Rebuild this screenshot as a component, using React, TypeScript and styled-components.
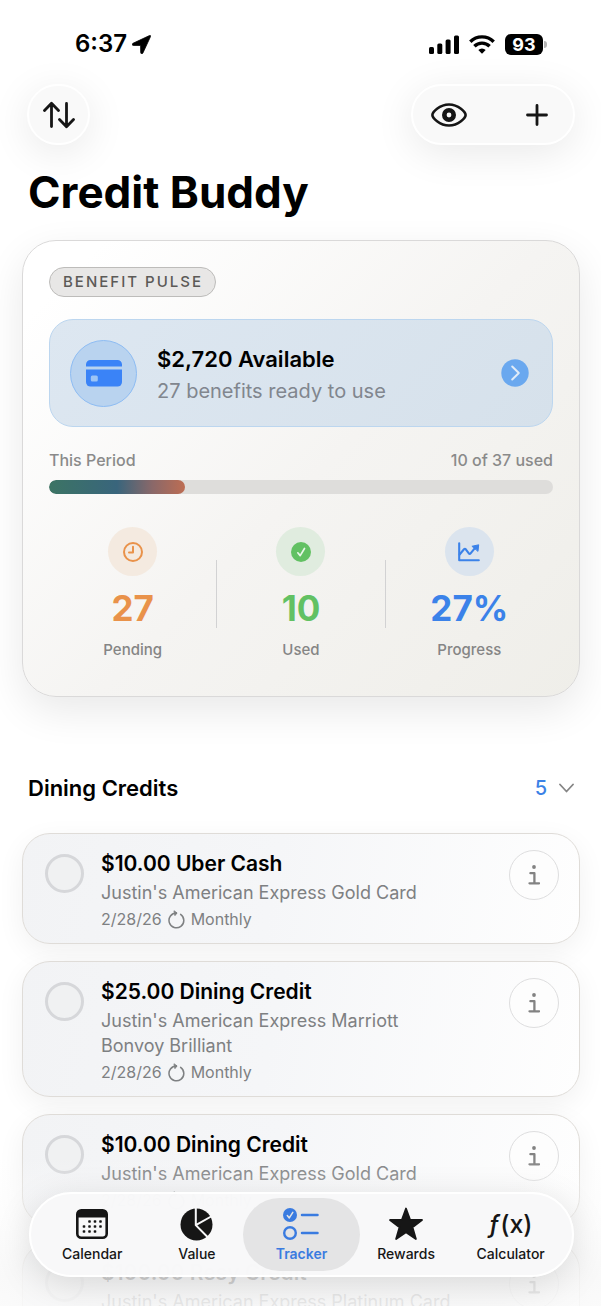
import React from "react";
import styled, { createGlobalStyle, css } from "styled-components";

const GlobalStyle = createGlobalStyle`
  *, *::before, *::after { box-sizing: border-box; }
  html, body, #root { margin: 0; padding: 0; height: 100%; }
  body {
    background: #ffffff;
    color: #000000;
    font-family: Inter, "Liberation Sans", sans-serif;
    -webkit-font-smoothing: antialiased;
  }
  button, input { font: inherit; color: inherit; margin: 0; padding: 0; }
  button { border: 0; background: none; cursor: pointer; }
  h1, h2, h3, p, ul, dl, dt, dd { margin: 0; padding: 0; font-weight: inherit; }
  ul { list-style: none; }
  svg { display: block; flex: none; }
`;

const Shell = styled.div`
  position: relative;
  height: 100vh;
  overflow: hidden;
`;

const Scroller = styled.div`
  height: 100%;
  overflow-y: auto;
  scrollbar-width: none;
  padding: 0 21px 120px 22px;
`;

/* ---------- status bar ---------- */

const StatusBar = styled.div`
  display: flex;
  justify-content: space-between;
  align-items: center;
  height: 84px;
  padding: 4px 33px 0 53px;
`;

const StatusGroup = styled.div<{ $gap: number }>`
  display: flex;
  align-items: center;
  gap: ${(p) => p.$gap}px;
`;

const Clock = styled.time`
  font-size: 24px;
  line-height: 28px;
  font-weight: 600;
`;

const Battery = styled.div`
  display: flex;
  align-items: center;
  gap: 1px;
  &::after {
    content: "";
    width: 3px;
    height: 7px;
    border-radius: 0 3px 3px 0;
    background: #b4b4b4;
  }
`;

const BatteryLevel = styled.span`
  width: 38px;
  height: 21px;
  border-radius: 6px;
  background: #000;
  color: #fff;
  font-size: 18px;
  line-height: 21px;
  font-weight: 700;
  text-align: center;
`;

/* ---------- header ---------- */

const Toolbar = styled.div`
  display: flex;
  justify-content: space-between;
  padding: 0 5px;
`;

const Glass = styled.div<{ $wide?: boolean }>`
  display: flex;
  justify-content: space-between;
  width: ${(p) => (p.$wide ? 164 : 63)}px;
  height: 61px;
  border: 2px solid #ffffff;
  border-radius: 31px;
  background: #f9f9f9;
  box-shadow: 0 8px 40px rgba(0, 0, 0, 0.09);
`;

const ToolButton = styled.button<{ $fill?: boolean }>`
  display: flex;
  align-items: center;
  justify-content: center;
  width: ${(p) => (p.$fill ? "100%" : "72px")};
  height: 100%;
`;

const PageTitle = styled.h1`
  margin: 19px 0 20px;
  padding-left: 6px;
  font-size: 44px;
  line-height: 56px;
  font-weight: 700;
`;

/* ---------- pulse card ---------- */

const PulseCard = styled.section`
  padding: 26px 26px 36px;
  border: 1px solid #dad9d9;
  border-radius: 34px;
  background: linear-gradient(135deg, #ffffff 8%, #f5f4f2 52%, #efeee9 100%);
  box-shadow: 0 14px 40px rgba(0, 0, 0, 0.09);
`;

const Badge = styled.h2`
  width: fit-content;
  height: 30px;
  padding: 0 12px 0 13px;
  border: 1px solid #bdbcba;
  border-radius: 15px;
  background: #e8e7e6;
  color: #5c5a57;
  font-size: 15px;
  line-height: 28px;
  font-weight: 500;
  letter-spacing: 2px;
`;

const Available = styled.button`
  display: flex;
  align-items: center;
  width: 100%;
  height: 108px;
  margin: 22px 0 21px;
  padding: 0 23px 0 20px;
  border: 1px solid #bcd6ef;
  border-radius: 24px;
  background: linear-gradient(135deg, #dde7f1, #d6e1eb);
  text-align: left;
`;

const CardDisc = styled.span`
  display: flex;
  align-items: center;
  justify-content: center;
  width: 67px;
  height: 67px;
  border: 1px solid #8dbcf3;
  border-radius: 50%;
  background: #b9d3ef;
`;

const AvailableText = styled.span`
  flex: 1;
  margin-left: 20px;
  padding-top: 3px;
  display: flex;
  flex-direction: column;
  gap: 2px;
`;

const Amount = styled.span`
  font-size: 22px;
  line-height: 30px;
  font-weight: 600;
`;

const AmountNote = styled.span`
  font-size: 20px;
  line-height: 30px;
  color: #81868e;
`;

const PeriodRow = styled.div`
  display: flex;
  justify-content: space-between;
  font-size: 16px;
  line-height: 24px;
  font-weight: 500;
  color: #8a8a8a;
`;

const Track = styled.div`
  height: 14px;
  margin: 8px 0 33px;
  border-radius: 7px;
  background: #dedddb;
  overflow: hidden;
`;

const Fill = styled.div`
  height: 100%;
  border-radius: 7px;
  background: linear-gradient(90deg, #3c7464 0%, #39657c 50%, #8a6869 76%, #bd6d53 100%);
`;

const Stats = styled.dl`
  display: grid;
  grid-template-columns: 1fr 1px 1fr 1px 1fr;
  align-items: center;
`;

const StatDivider = styled.span`
  height: 68px;
  background: #d2d2d3;
`;

const Stat = styled.div<{ $color: string }>`
  display: flex;
  flex-direction: column;
  align-items: center;
  gap: 10px;
  color: ${(p) => p.$color};
`;

const StatDisc = styled.span<{ $tint: string }>`
  display: flex;
  align-items: center;
  justify-content: center;
  width: 49px;
  height: 49px;
  border-radius: 50%;
  background: ${(p) => p.$tint};
`;

const StatValue = styled.dd`
  font-size: 35px;
  line-height: 44px;
  font-weight: 700;
`;

const StatLabel = styled.dt`
  order: 1;
  font-size: 15px;
  line-height: 20px;
  font-weight: 500;
  color: #858585;
`;

/* ---------- credit list ---------- */

const SectionHeader = styled.button`
  display: flex;
  align-items: center;
  width: 100%;
  margin: 77px 0 31px;
  padding: 0 6px;
`;

const SectionTitle = styled.span`
  flex: 1;
  text-align: left;
  font-size: 22px;
  line-height: 28px;
  font-weight: 600;
`;

const Count = styled.span`
  margin-right: 12px;
  font-size: 20px;
  line-height: 28px;
  font-weight: 500;
  color: #3b82e6;
`;

const CreditList = styled.ul`
  display: flex;
  flex-direction: column;
  gap: 17px;
`;

const CreditCard = styled.li`
  display: flex;
  align-items: flex-start;
  padding: 16px 20px 12px 22px;
  border: 1px solid #dfdcd8;
  border-radius: 28px;
  background: linear-gradient(100deg, #f2f3f5 0%, #f5f6f8 45%, #fefefe 100%);
  box-shadow: 0 8px 28px rgba(0, 0, 0, 0.06);
`;

const Check = styled.input`
  appearance: none;
  flex: none;
  width: 39px;
  height: 39px;
  margin-top: 4px;
  border: 3px solid #d6d7da;
  border-radius: 50%;
  background: #f0f1f2;
`;

const CreditText = styled.label`
  flex: 1;
  display: flex;
  flex-direction: column;
  gap: 2px;
  margin: 0 51px 0 17px;
`;

const CreditTitle = styled.span`
  font-size: 21px;
  line-height: 28px;
  font-weight: 600;
`;

const CreditOwner = styled.span`
  font-size: 18px;
  line-height: 25px;
  color: #7e8082;
`;

const CreditMeta = styled.span`
  display: flex;
  align-items: center;
  gap: 6px;
  font-size: 16px;
  line-height: 24px;
  color: #7e8082;
`;

const InfoButton = styled.button`
  display: flex;
  align-items: center;
  justify-content: center;
  flex: none;
  width: 50px;
  height: 50px;
  border: 1px solid #dededf;
  border-radius: 50%;
  background: #fdfdfd;
  color: #828282;
`;

/* ---------- tab bar ---------- */

const BottomFade = styled.div`
  position: absolute;
  inset: auto 0 0;
  height: 150px;
  pointer-events: none;
  background: linear-gradient(
    rgba(252, 252, 252, 0) 0%,
    rgba(251, 251, 251, 0.3) 25%,
    rgba(249, 249, 249, 0.45) 50%,
    rgba(248, 248, 248, 0.84) 80%,
    rgba(250, 250, 250, 0.86) 100%
  );
`;

const TabBar = styled.nav`
  position: absolute;
  inset: auto 27px 29px 29px;
  display: grid;
  grid-template-columns: repeat(5, 1fr);
  height: 85px;
  padding: 4px 9px;
  border: 2px solid #ffffff;
  border-radius: 43px;
  background: rgba(248, 248, 249, 0.98);
  box-shadow: 0 8px 36px rgba(0, 0, 0, 0.13);
`;

const Tab = styled.button<{ $active?: boolean }>`
  display: flex;
  flex-direction: column;
  align-items: center;
  gap: 2px;
  margin: 0 -6px;
  padding-top: 8px;
  border-radius: 37px;
  color: #161616;
  font-size: 14px;
  line-height: 20px;
  font-weight: 500;
  ${(p) =>
    p.$active &&
    css`
      background: #e4e4e5;
      color: #3a7be0;
      font-weight: 600;
    `}
`;

const TabIcon = styled.span`
  display: flex;
  align-items: center;
  justify-content: center;
  height: 36px;
`;

const FunctionGlyph = styled.span`
  font-size: 25px;
  line-height: 36px;
  font-weight: 500;
  i { margin-right: 1px; }
`;

/* ---------- icons ---------- */

const LocationIcon = () => (
  <svg width="19" height="19" viewBox="0 0 19 19" aria-hidden="true">
    <path d="M17.6.5 1 8.3C-.2 8.900.1 10.400 1.400 10.400L8.600 10.400 8.700 17.600C8.700 19 10.300 19.300 10.900 18L18.500 1.600C18.900.7 18.400.2 17.600.5Z" fill="#000" stroke="#000" strokeWidth="0.800" />
  </svg>
);

const SignalIcon = () => (
  <svg width="30" height="19" viewBox="0 0 30 19" aria-hidden="true">
    <rect x="0" y="12" width="5" height="7" rx="1.500" />
    <rect x="8.300" y="8.500" width="5" height="10.500" rx="1.500" />
    <rect x="16.600" y="4.500" width="5" height="14.500" rx="1.500" />
    <rect x="25" y="0.500" width="5" height="18.500" rx="1.500" />
  </svg>
);

const WifiIcon = () => (
  <svg width="26" height="19" viewBox="0 0 26 19" fill="none" stroke="#000" strokeWidth="3.400" aria-hidden="true">
    <path d="M1.300 6.700a16.600 16.600 0 0 1 23.400 0" />
    <path d="M5.400 11.300a10.700 10.700 0 0 1 15.200 0" />
    <path d="M13 18.700 9.300 15a5.300 5.300 0 0 1 7.400 0Z" fill="#000" stroke="none" />
  </svg>
);

const SortIcon = () => (
  <svg width="32" height="28" viewBox="0 0 32 28" fill="none" stroke="#161616" strokeWidth="2.800" strokeLinecap="round" strokeLinejoin="round" aria-hidden="true">
    <path d="M8.500 25.500V2.500M1.500 9.500l7-7.200 7 7.200M23.500 2.500v23M16.500 18.500l7 7.200 7-7.200" />
  </svg>
);

const EyeIcon = () => (
  <svg width="36" height="24" viewBox="0 0 36 24" fill="none" stroke="#161616" aria-hidden="true">
    <path d="M1.400 12C1.400 9.300 8.300 1.500 18 1.500S34.600 9.300 34.600 12 27.700 22.500 18 22.500 1.400 14.700 1.400 12Z" strokeWidth="2.600" />
    <circle cx="18" cy="12" r="4.700" strokeWidth="4.600" />
  </svg>
);

const PlusIcon = () => (
  <svg width="22" height="22" viewBox="0 0 22 22" stroke="#161616" strokeWidth="2.800" strokeLinecap="round" aria-hidden="true">
    <path d="M11 1.500v19M1.500 11h19" />
  </svg>
);

const CreditCardIcon = () => (
  <svg width="36" height="27" viewBox="0 0 36 27" aria-hidden="true">
    <path d="M0 6.500V4.500A4.500 4.500 0 0 1 4.500 0h27A4.500 4.500 0 0 1 36 4.500v2Z" fill="#3a83f7" />
    <path d="M0 9.500h36v12.500a4.500 4.500 0 0 1-4.500 4.500h-27A4.500 4.500 0 0 1 0 22Z" fill="#3a83f7" />
    <rect x="4.800" y="15.500" width="7" height="6" rx="1.500" fill="#9cc4f5" />
  </svg>
);

const ArrowDisc = () => (
  <svg width="28" height="28" viewBox="0 0 28 28" aria-hidden="true">
    <circle cx="14" cy="14" r="13.700" fill="#6aa8ef" />
    <path d="M11.200 7.500 17.800 14l-6.600 6.500" fill="none" stroke="#e1ecf8" strokeWidth="2" strokeLinecap="round" strokeLinejoin="round" />
  </svg>
);

const PendingIcon = () => (
  <svg width="20" height="20" viewBox="0 0 20 20" fill="none" stroke="#e9924a" strokeWidth="2" strokeLinecap="round" strokeLinejoin="round" aria-hidden="true">
    <circle cx="10" cy="10" r="9" />
    <path d="M10 4.800V10.500H6" />
  </svg>
);

const UsedIcon = () => (
  <svg width="20" height="20" viewBox="0 0 20 20" aria-hidden="true">
    <circle cx="10" cy="10" r="10" fill="#62c163" />
    <path d="M6.800 10.800 9.200 13.600 13.500 6.500" fill="none" stroke="#e9f6e9" strokeWidth="1.700" strokeLinecap="round" strokeLinejoin="round" />
  </svg>
);

const ProgressIcon = () => (
  <svg width="22" height="20" viewBox="0 0 22 20" fill="none" stroke="#3b82e9" strokeWidth="2.100" strokeLinecap="round" strokeLinejoin="round" aria-hidden="true">
    <path d="M1.200 1.200v17h19.600" />
    <path d="M1.600 12.500 6 7.300c.7-.8 1.200-.7 1.800 0l3 4c.6.800 1.200.800 1.800 0l5.300-6.500" />
    <path d="M14.300 4.200 20.700 2.800 20 9Z" fill="#3b82e9" strokeWidth="1" />
  </svg>
);

const ChevronDown = () => (
  <svg width="15" height="10" viewBox="0 0 15 10" fill="none" stroke="#858585" strokeWidth="1.800" strokeLinecap="round" strokeLinejoin="round" aria-hidden="true">
    <path d="m1 1.500 6.500 7 6.500-7" />
  </svg>
);

const RepeatIcon = () => (
  <svg width="17" height="19" viewBox="0 0 17 19" fill="none" stroke="#7e8082" strokeWidth="1.500" strokeLinecap="round" strokeLinejoin="round" aria-hidden="true">
    <path d="M12.600 4.300A7.400 7.400 0 1 1 8.500 3" />
    <path d="M6.300 1 9 3 7.200 5.300Z" fill="#7e8082" strokeWidth="1" />
  </svg>
);

const InfoIcon = () => (
  <svg width="12" height="20" viewBox="0 0 12 20" fill="none" stroke="currentColor" strokeWidth="2.300" strokeLinecap="round" strokeLinejoin="round" aria-hidden="true">
    <circle cx="6" cy="2" r="1.900" fill="currentColor" stroke="none" />
    <path d="M2.400 8.200h4v10M1.500 18.300h9.500" />
  </svg>
);

const CalendarIcon = () => {
  const dots = [
    [13.500, 12.500], [19, 12.500], [24.500, 12.500],
    [8, 17.500], [13.500, 17.500], [19, 17.500], [24.500, 17.500],
    [8, 22.500], [13.500, 22.500], [19, 22.500],
  ];
  return (
    <svg width="32" height="30" viewBox="0 0 32 30" aria-hidden="true">
      <rect x="1.300" y="1.300" width="29.400" height="27.400" rx="4" fill="none" stroke="currentColor" strokeWidth="2.600" />
      <path d="M1 8.500V5a4 4 0 0 1 4-4h22a4 4 0 0 1 4 4v3.500Z" fill="currentColor" />
      {dots.map(([x, y]) => (
        <rect key={`${x}-${y}`} x={x - 1.300} y={y - 1.300} width="2.600" height="2.600" rx="0.800" fill="currentColor" />
      ))}
    </svg>
  );
};

const PieIcon = () => (
  <svg width="33" height="33" viewBox="0 0 33 33" aria-hidden="true">
    <circle cx="16.500" cy="16.500" r="16" fill="currentColor" />
    <path d="M15.800 0v17.200L28.500 30M15.800 17.200 32 8" fill="none" stroke="#f8f8f9" strokeWidth="2" />
  </svg>
);

const TrackerIcon = () => (
  <svg width="36" height="32" viewBox="0 0 36 32" fill="none" stroke="currentColor" strokeLinecap="round" aria-hidden="true">
    <circle cx="7" cy="7" r="7" fill="currentColor" stroke="none" />
    <path d="m4.300 7.500 2 2.400 3.500-5.600" stroke="#e4e4e5" strokeWidth="1.500" strokeLinejoin="round" />
    <circle cx="7" cy="25" r="5.800" strokeWidth="2.400" />
    <path d="M19 7h15.500M19 25h15.500" strokeWidth="2.500" />
  </svg>
);

const StarIcon = () => (
  <svg width="36" height="34" viewBox="0 0 36 34" aria-hidden="true">
    <path d="M18 1.500 22 12.600 34 13 24.500 20.300 27.900 32 18 25.200 8.100 32 11.500 20.300 2 13 14 12.600Z" fill="currentColor" stroke="currentColor" strokeWidth="1.800" strokeLinejoin="round" />
  </svg>
);

/* ---------- data ---------- */

const credits = [
  { title: "$10.00 Uber Cash", owner: "Justin's American Express Gold Card" },
  { title: "$25.00 Dining Credit", owner: "Justin's American Express Marriott Bonvoy Brilliant" },
  { title: "$10.00 Dining Credit", owner: "Justin's American Express Gold Card" },
  { title: "$100.00 Resy Credit", owner: "Justin's American Express Platinum Card" },
];

const stats = [
  { label: "Pending", value: "27", color: "#e9924a", tint: "#f4eae0", icon: <PendingIcon /> },
  { label: "Used", value: "10", color: "#62c163", tint: "#e0ecdf", icon: <UsedIcon /> },
  { label: "Progress", value: "27%", color: "#3b82e9", tint: "#dbe4ee", icon: <ProgressIcon /> },
];

const tabs = [
  { label: "Calendar", icon: <CalendarIcon /> },
  { label: "Value", icon: <PieIcon /> },
  { label: "Tracker", icon: <TrackerIcon />, active: true },
  { label: "Rewards", icon: <StarIcon /> },
  { label: "Calculator", icon: <FunctionGlyph><i>ƒ</i>(x)</FunctionGlyph> },
];

export default function App() {
  const used = 10;
  const total = 37;
  return (
    <Shell>
      <GlobalStyle />
      <Scroller>
        <StatusBar>
          <StatusGroup $gap={5}>
            <Clock>6:37</Clock>
            <LocationIcon />
          </StatusGroup>
          <StatusGroup $gap={10}>
            <SignalIcon />
            <WifiIcon />
            <Battery>
              <BatteryLevel>93</BatteryLevel>
            </Battery>
          </StatusGroup>
        </StatusBar>

        <header>
          <Toolbar>
            <Glass>
              <ToolButton $fill aria-label="Sort"><SortIcon /></ToolButton>
            </Glass>
            <Glass $wide>
              <ToolButton aria-label="Show or hide"><EyeIcon /></ToolButton>
              <ToolButton aria-label="Add"><PlusIcon /></ToolButton>
            </Glass>
          </Toolbar>
          <PageTitle>Credit Buddy</PageTitle>
        </header>

        <main>
          <PulseCard>
            <Badge>BENEFIT PULSE</Badge>
            <Available>
              <CardDisc><CreditCardIcon /></CardDisc>
              <AvailableText>
                <Amount>$2,720 Available</Amount>
                <AmountNote>27 benefits ready to use</AmountNote>
              </AvailableText>
              <ArrowDisc />
            </Available>
            <PeriodRow>
              <span>This Period</span>
              <span>{used} of {total} used</span>
            </PeriodRow>
            <Track>
              <Fill style={{ width: `${(used / total) * 100}%` }} />
            </Track>
            <Stats>
              {stats.map((s, i) => (
                <React.Fragment key={s.label}>
                  {i > 0 && <StatDivider />}
                  <Stat $color={s.color}>
                    <StatDisc $tint={s.tint}>{s.icon}</StatDisc>
                    <StatLabel>{s.label}</StatLabel>
                    <StatValue>{s.value}</StatValue>
                  </Stat>
                </React.Fragment>
              ))}
            </Stats>
          </PulseCard>

          <SectionHeader aria-expanded="true">
            <SectionTitle>Dining Credits</SectionTitle>
            <Count>5</Count>
            <ChevronDown />
          </SectionHeader>

          <CreditList>
            {credits.map((c, i) => (
              <CreditCard key={i}>
                <Check type="checkbox" id={`credit-${i}`} />
                <CreditText htmlFor={`credit-${i}`}>
                  <CreditTitle>{c.title}</CreditTitle>
                  <CreditOwner>{c.owner}</CreditOwner>
                  <CreditMeta>
                    2/28/26 <RepeatIcon /> Monthly
                  </CreditMeta>
                </CreditText>
                <InfoButton aria-label={`Details for ${c.title}`}><InfoIcon /></InfoButton>
              </CreditCard>
            ))}
          </CreditList>
        </main>
      </Scroller>

      <BottomFade />
      <TabBar aria-label="Main">
        {tabs.map((t) => (
          <Tab key={t.label} $active={t.active} aria-current={t.active ? "page" : undefined}>
            <TabIcon>{t.icon}</TabIcon>
            {t.label}
          </Tab>
        ))}
      </TabBar>
    </Shell>
  );
}
